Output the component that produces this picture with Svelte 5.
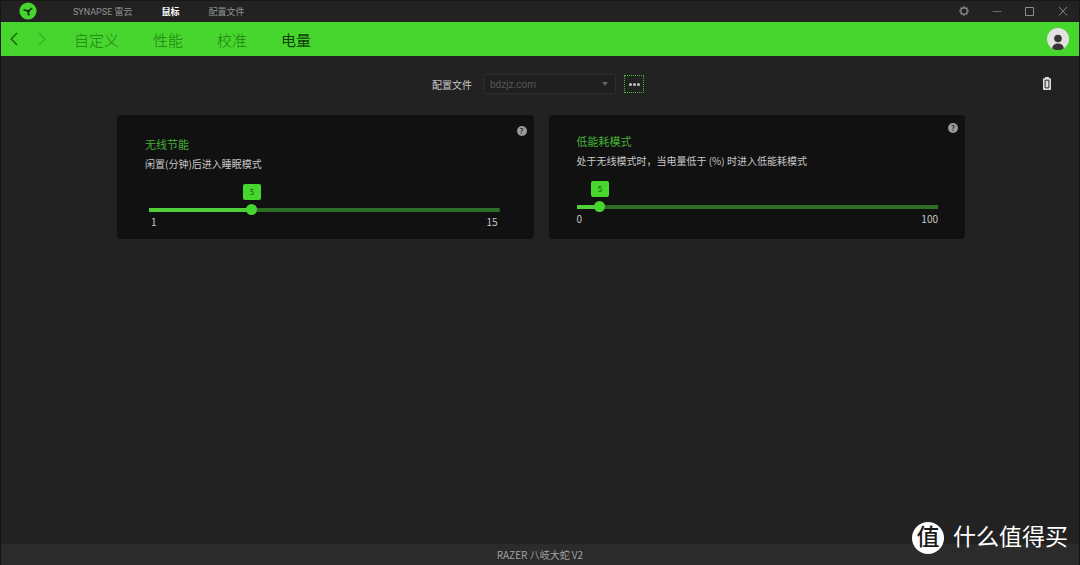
<script lang="ts">
	interface PowerSetting {
		id: string;
		title: string;
		description: string;
		min: number;
		max: number;
		value: number;
		roomy: boolean;
	}

	const sections = ['SYNAPSE 雷云', '鼠标', '配置文件'];
	const tabs = ['自定义', '性能', '校准', '电量'];

	let section = $state('鼠标');
	let tab = $state('电量');
	let profile = $state('bdzjz.com');

	let settings: PowerSetting[] = $state([
		{
			id: 'sleep',
			title: '无线节能',
			description: '闲置(分钟)后进入睡眠模式',
			min: 1,
			max: 15,
			value: 5,
			roomy: true,
		},
		{
			id: 'low-power',
			title: '低能耗模式',
			description: '处于无线模式时，当电量低于 (%) 时进入低能耗模式',
			min: 0,
			max: 100,
			value: 5,
			roomy: false,
		},
	]);

	function fraction(s: PowerSetting) {
		return (s.value - s.min) / (s.max - s.min);
	}
</script>

<div class="window">
	<header class="titlebar">
		<svg class="logo" viewBox="0 0 18 18" aria-label="Synapse">
			<circle cx="9" cy="9" r="8.6" fill="#47d62e" />
			<g fill="none" stroke="#16300f" stroke-linecap="round" stroke-linejoin="round">
				<path d="M5.6 8 9.2 9.4 9.6 12.600M9.200 9.400 12.500 6.700" stroke-width="1.500" />
				<path d="M5.200 7.400l-.2 1.300M8.800 12.800l1.600-.2M12 6l1 1.100" stroke-width="1" />
			</g>
			<circle cx="9.200" cy="9.200" r="1.400" fill="#16300f" />
		</svg>
		<nav class="sections">
			{#each sections as name}
				<button class:active={section === name} onclick={() => (section = name)}>{name}</button>
			{/each}
		</nav>
		<div class="controls">
			<button aria-label="设置">
				<svg viewBox="0 0 12 12">
					<circle cx="6" cy="6" r="3.200" stroke-width="1.200" />
					<path
						d="M6 1.200v1.600M6 9.200v1.600M1.200 6h1.600M9.200 6h1.600M2.600 2.600l1.100 1.100M8.300 8.300l1.100 1.100M2.600 9.400l1.100-1.100M8.300 3.700l1.100-1.100"
						stroke-width="1.600"
					/>
				</svg>
			</button>
			<button aria-label="最小化">
				<svg viewBox="0 0 12 12"><path d="M1.500 6.500h9" stroke="#686868" /></svg>
			</button>
			<button aria-label="最大化">
				<svg viewBox="0 0 12 12"><path d="M1.500 2.500h8v8h-8z" /></svg>
			</button>
			<button aria-label="关闭">
				<svg viewBox="0 0 12 12"><path d="M2 2l8 8.500M10 2l-8 8.500" /></svg>
			</button>
		</div>
	</header>

	<div class="navbar">
		<button class="arrow" aria-label="后退">
			<svg viewBox="0 0 8 14"><path d="M7 1 1.200 7 7 13" /></svg>
		</button>
		<button class="arrow disabled" aria-label="前进">
			<svg viewBox="0 0 8 14"><path d="M1 1l5.800 6L1 13" /></svg>
		</button>
		<nav class="tabs">
			{#each tabs as name}
				<button class:active={tab === name} onclick={() => (tab = name)}>{name}</button>
			{/each}
		</nav>
		<button class="avatar" aria-label="账户">
			<svg viewBox="0 0 22 22">
				<circle cx="11" cy="11" r="11" fill="#e2e2e2" />
				<circle cx="11" cy="10.500" r="3.800" fill="#393236" />
				<path d="M5.200 20.400c.2-3.200 2.600-4.800 5.800-4.800s5.600 1.600 5.800 4.800a11 11 0 0 1-11.600 0z" fill="#393236" />
			</svg>
		</button>
	</div>

	<main>
		<div class="toolbar">
			<label for="profile">配置文件</label>
			<div class="select">
				<select id="profile" bind:value={profile}>
					<option value="bdzjz.com">bdzjz.com</option>
				</select>
				<span class="caret"></span>
			</div>
			<button class="more" aria-label="更多">
				<span></span><span></span><span></span>
			</button>
			<svg class="battery" viewBox="0 0 8 13" aria-label="电池">
				<path d="M2 0h4v1.200h1q1 0 1 1V12q0 1-1 1H1q-1 0-1-1V2.200q0-1 1-1h1z" fill="#dedede" />
				<path d="M2.100 3.200h3.800v7.700H2.100z" fill="none" stroke="#2b2b2b" stroke-width="1" />
			</svg>
		</div>

		<div class="cards">
			{#each settings as s (s.id)}
				<section class="card" class:roomy={s.roomy}>
					<button class="help" aria-label="帮助">?</button>
					<h2>{s.title}</h2>
					<label for={s.id}>{s.description}</label>
					<div class="slider" style="--at: {fraction(s)}">
						<output for={s.id}>{s.value}</output>
						<input id={s.id} type="range" min={s.min} max={s.max} bind:value={s.value} />
						<div class="limits">
							<span>{s.min}</span>
							<span>{s.max}</span>
						</div>
					</div>
				</section>
			{/each}
		</div>
	</main>

	<footer>RAZER 八岐大蛇 V2</footer>

	<div class="brand">
		<span class="seal">值</span>
		<span>什么值得买</span>
	</div>
</div>

<style>
	:global(body) {
		margin: 0;
		background: #222;
	}

	.window {
		position: relative;
		display: flex;
		flex-direction: column;
		min-height: 100vh;
		box-sizing: border-box;
		border: 1px solid #161616;
		border-bottom: 0;
		background: #222;
		color: #c8c8c8;
		font-family: Roboto, 'Noto Sans CJK SC', sans-serif;
		font-size: 10px;
	}

	button {
		padding: 0;
		border: 0;
		background: none;
		color: inherit;
		font: inherit;
		cursor: pointer;
	}

	svg {
		display: block;
	}

	.titlebar {
		display: flex;
		align-items: center;
		height: 20px;
		padding: 0 10px 1px 18px;
	}

	.logo {
		width: 18px;
		height: 18px;
	}

	.sections {
		display: flex;
		gap: 29px;
		margin-left: 36px;
		color: #929292;
		font-size: 9px;
	}

	.sections .active {
		color: #fff;
		font-weight: 700;
	}

	.controls {
		display: flex;
		gap: 21px;
		margin-left: auto;
	}

	.controls svg {
		width: 12px;
		height: 12px;
		fill: none;
		stroke: #8c8c8c;
		stroke-width: 1;
	}

	.navbar {
		display: flex;
		align-items: center;
		height: 34px;
		padding: 0 10px 0 9px;
		background: #47d62e;
	}

	.arrow svg {
		width: 8px;
		height: 14px;
		fill: none;
		stroke: #175c0d;
		stroke-width: 1.3;
	}

	.arrow.disabled {
		margin-left: 20px;
		opacity: 0.3;
	}

	.tabs {
		display: flex;
		gap: 34px;
		margin-left: 28px;
		color: #218013;
		font-size: 15px;
		font-weight: 300;
	}

	.tabs .active {
		color: #0f3d08;
		font-weight: 400;
	}

	.avatar {
		margin-left: auto;
	}

	.avatar svg {
		width: 22px;
		height: 22px;
	}

	main {
		flex: 1;
	}

	.toolbar {
		position: relative;
		display: flex;
		align-items: center;
		justify-content: center;
		height: 20px;
		padding: 18px 4px 21px 0;
	}

	.select {
		position: relative;
		margin: 0 8px 0 12px;
	}

	select {
		appearance: none;
		display: block;
		width: 132px;
		height: 20px;
		padding: 0 5px;
		border: 1px solid #2d2d2d;
		border-radius: 0;
		background: #1f1f1f;
		color: #565656;
		font: inherit;
		font-size: 10px;
	}

	.caret {
		position: absolute;
		top: 8px;
		right: 8px;
		border: 3px solid transparent;
		border-top: 4px solid #626262;
		border-bottom: 0;
		pointer-events: none;
	}

	.more {
		display: flex;
		align-items: center;
		justify-content: center;
		gap: 1px;
		width: 20px;
		height: 18px;
		box-sizing: border-box;
		border: 1px dotted #47b636;
	}

	.more span {
		width: 3px;
		height: 3px;
		border-radius: 50%;
		background: #c4c4c4;
	}

	.battery {
		position: absolute;
		top: 21px;
		right: 28px;
		width: 8px;
		height: 13px;
	}

	.cards {
		display: grid;
		grid-template-columns: 1fr 1fr;
		gap: 15px;
		padding: 0 114px 0 116px;
	}

	.card {
		position: relative;
		padding: 17px 27px 13px 28px;
		border-radius: 4px;
		background: #111;
		font-family: 'Noto Sans CJK SC', sans-serif;
	}

	.card.roomy {
		padding: 20px 34px 10px 28px;
	}

	.roomy .slider {
		margin-left: 4px;
	}

	.help {
		position: absolute;
		top: 8px;
		right: 7px;
		width: 10px;
		height: 10px;
		border-radius: 50%;
		background: #9a9a9a;
		color: #1c1c1c;
		font-size: 8px;
		font-weight: 500;
		line-height: 10px;
	}

	.roomy .help {
		top: 11px;
	}

	h2 {
		margin: 0 0 3px;
		color: #44b035;
		font-size: 11px;
		font-weight: 400;
		line-height: 18px;
	}

	.card label {
		display: block;
		line-height: 16px;
	}

	.slider {
		position: relative;
		padding-top: 32px;
	}

	output {
		position: absolute;
		top: 12px;
		left: calc(var(--at) * (100% - 11px) - 3px);
		width: 18px;
		height: 16px;
		border-radius: 2px;
		background: #47d62e;
		color: #17590d;
		font-size: 8px;
		line-height: 16px;
		text-align: center;
	}

	input[type='range'] {
		--stop: calc(var(--at) * (100% - 11px) + 5px);
		appearance: none;
		display: block;
		width: 100%;
		height: 11px;
		margin: 0;
		border-radius: 2px;
		background: linear-gradient(to right, #51cf3b var(--stop), #2f6e27 var(--stop)) center / 100% 4px no-repeat;
	}

	input[type='range']::-webkit-slider-thumb {
		appearance: none;
		width: 11px;
		height: 11px;
		border-radius: 50%;
		background: #47d62e;
	}

	.limits {
		display: flex;
		justify-content: space-between;
		line-height: 14px;
	}

	.roomy .limits {
		padding: 0 2px;
	}

	footer {
		height: 21px;
		background: #2b2b2b;
		color: #a2a2a2;
		font-family: 'Noto Sans CJK SC', sans-serif;
		line-height: 21px;
		text-align: center;
	}

	.brand {
		position: absolute;
		right: 11px;
		bottom: 11px;
		display: flex;
		align-items: center;
		gap: 9px;
		color: #fff;
		font-size: 23px;
		line-height: 32px;
	}

	.seal {
		width: 32px;
		height: 32px;
		border-radius: 50%;
		background: #fff;
		color: #1b1b1b;
		font-weight: 500;
		text-align: center;
	}
</style>
